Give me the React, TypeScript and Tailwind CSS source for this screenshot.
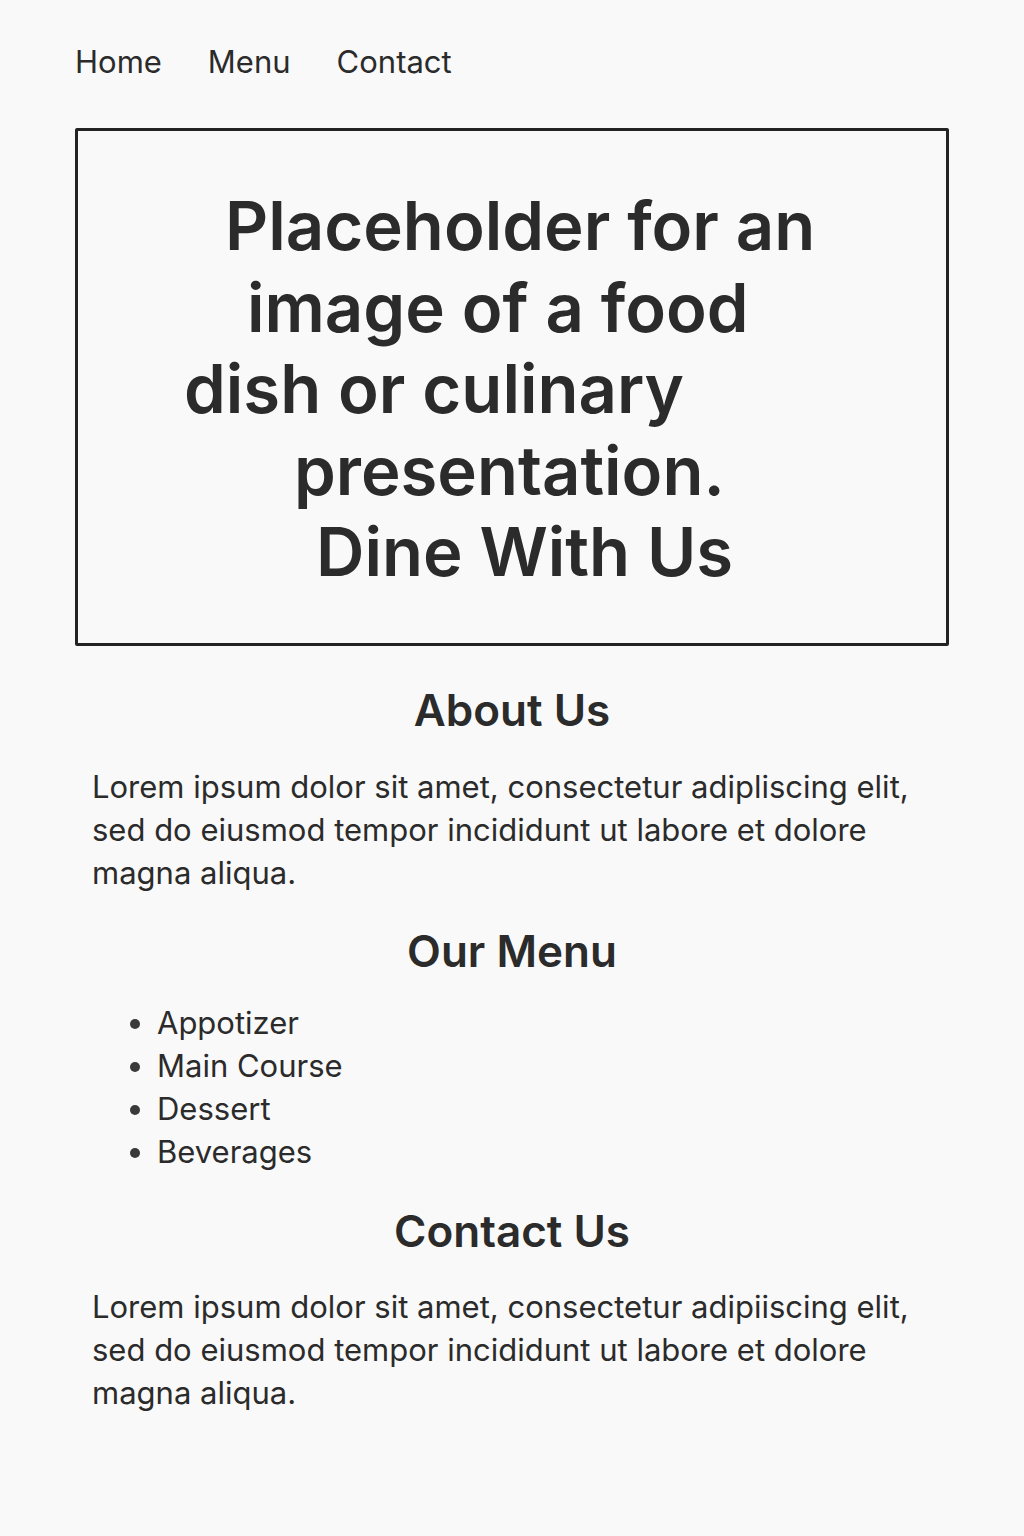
import React from "react";

const heroLines = [
  { text: "Placeholder for an", className: "ml-[147px]" },
  { text: "image of a food", className: "ml-[169px]" },
  { text: "dish or culinary", className: "ml-[106px]" },
  { text: "presentation.", className: "ml-[216px]" },
  { text: "Dine With Us", className: "ml-[238px]" },
];

const menuItems = ["Appotizer", "Main Course", "Dessert", "Beverages"];

const SectionHeading = ({ children }: { children: React.ReactNode }) => (
  <h2 className="text-center text-[44px] font-semibold leading-[48px]">{children}</h2>
);

export default function App() {
  return (
    <div className="min-h-[1536px] bg-[#f9f9f9] text-[#2b2b2b] font-['Inter',sans-serif]">
      <div className="px-[75px] pt-[42px]">
        <nav className="flex gap-[46px] text-[31px] leading-[40px]">
          <a href="#">Home</a>
          <a href="#">Menu</a>
          <a href="#">Contact</a>
        </nav>

        <header className="mt-[46px] h-[518px] border-[3px] border-[#232323] rounded-[2px] pt-[54px]">
          <h1 className="flex flex-col text-[67px] font-semibold leading-[81.5px]">
            {heroLines.map((line) => (
              <span key={line.text} className={line.className}>
                {line.text}
              </span>
            ))}
          </h1>
        </header>

        <main className="px-[17px] pt-[40px]">
          <section>
            <SectionHeading>About Us</SectionHeading>
            <p className="mt-[31px] text-[31px] leading-[43px]">
              Lorem ipsum dolor sit amet, consectetur adipliscing elit, sed do eiusmod tempor incididunt ut labore et
              dolore magna aliqua.
            </p>
          </section>

          <section className="mt-[33px]">
            <SectionHeading>Our Menu</SectionHeading>
            <ul className="mt-[26px] list-disc pl-[65px] text-[31px] leading-[43px] marker:text-[#3a3a3a]">
              {menuItems.map((item) => (
                <li key={item}>{item}</li>
              ))}
            </ul>
          </section>

          <section className="mt-[34px]">
            <SectionHeading>Contact Us</SectionHeading>
            <p className="mt-[30px] text-[31px] leading-[43px]">
              Lorem ipsum dolor sit amet, consectetur adipiiscing elit, sed do eiusmod tempor incididunt ut labore et
              dolore magna aliqua.
            </p>
          </section>
        </main>
      </div>
    </div>
  );
}
